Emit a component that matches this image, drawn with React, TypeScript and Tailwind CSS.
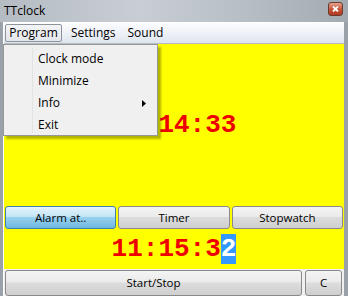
import { useState } from "react";

const ui = { fontFamily: '"Open Sans", "Noto Sans", sans-serif' };
const mono = { fontFamily: '"Liberation Mono", "Courier New", monospace' };

const grayBtn =
  "flex items-center justify-center rounded-[3px] border border-[#8a8a8a] bg-[linear-gradient(#f4f4f4_0%,#ebebeb_45%,#dcdcdc_50%,#cfcfcf_100%)] text-[11.5px] text-black";
const blueBtn =
  "flex items-center justify-center rounded-[3px] border border-[#3c7fb1] bg-[linear-gradient(#e5f4fc_0%,#c4e5f6_45%,#98d1ef_50%,#6fb7df_100%)] text-[11.5px] text-black";

function MenuDropdown() {
  const items = ["Clock mode", "Minimize", "Info", "Exit"];
  return (
    <div className="absolute left-[3px] top-[44px] z-10 w-[155px] h-[92px] border border-[#979797] bg-[#f0f0f0] shadow-[3px_3px_2px_rgba(0,0,0,0.3)]">
      <div className="absolute left-[28px] top-[2px] bottom-[2px] w-px bg-[#e2e3e3]" />
      <div className="flex flex-col pt-[3px]">
        {items.map((it) => (
          <div key={it} className="relative flex h-[22px] items-center pl-[34px] text-[12px] text-black">
            {it}
            {it === "Info" && (
              <svg className="absolute right-[11px] top-[8px]" width="4" height="7" viewBox="0 0 4 7">
                <path d="M0 0 L4 3.5 L0 7 Z" fill="#000" />
              </svg>
            )}
          </div>
        ))}
      </div>
    </div>
  );
}

export default function App() {
  const [menuOpen] = useState(true);

  return (
    <div className="relative w-[348px] h-[296px] overflow-hidden bg-[#9aa1a9]" style={ui}>
      {/* title bar */}
      <div className="flex h-[22px] items-center justify-between bg-[linear-gradient(90deg,#b4bbc3_0%,#c9ced4_40%,#b7bec6_70%,#a3aab2_100%)] pl-[4px] pr-[5px]">
        <span className="text-[12px] text-black">TTclock</span>
        <div className="mt-[-4px] flex h-[14px] w-[15px] items-center justify-center rounded-[3px] border border-[#6b3b30] bg-[linear-gradient(#e9a58f_0%,#c8563c_50%,#b23a20_100%)]">
          <svg width="7" height="6" viewBox="0 0 7 6">
            <path d="M1 0.5 L6 5.5 M6 0.5 L1 5.5" stroke="#fff" strokeWidth="1.8" />
          </svg>
        </div>
      </div>

      {/* client area */}
      <div className="ml-[3px] mr-[4px] flex h-[274px] flex-col border-l border-t border-[#ffffff] bg-[#f0f0f0]">
        {/* menu bar */}
        <div className="flex h-[21px] items-center border-b border-[#b6bcc6] bg-[linear-gradient(#fbfcfe_0%,#eef1f7_50%,#dfe5ee_100%)] pl-[1px] text-[12px] text-black">
          <div className="flex h-[18px] w-[57px] items-center justify-center rounded-[2px] border border-[#8e949c] bg-[linear-gradient(#f3f4f6,#e3e6eb)]">
            Program
          </div>
          <span className="ml-[9px]">Settings</span>
          <span className="ml-[12px]">Sound</span>
        </div>

        {/* yellow clock area */}
        <div className="flex h-[229px] flex-col bg-[#ffff00] px-[1px]">
          <div className="flex flex-1 items-center justify-center">
            <span className="text-[26px] font-bold leading-none text-[#ee0000]" style={mono}>
              11:14:33
            </span>
          </div>
          <div className="grid h-[23px] grid-cols-3 gap-[2px]">
            <div className={blueBtn}>Alarm at..</div>
            <div className={grayBtn}>Timer</div>
            <div className={grayBtn}>Stopwatch</div>
          </div>
          <div className="flex h-[40px] items-center justify-center">
            <span className="text-[26px] font-bold leading-[24px] text-[#ee0000]" style={mono}>
              11:15:3<span className="bg-[#3399ff] text-white">2</span>
            </span>
          </div>
        </div>

        {/* bottom buttons */}
        <div className="flex gap-[3px] pl-[1px] pr-[2px] pt-[1px]">
          <div className={`${grayBtn} h-[26px] flex-1`}>Start/Stop</div>
          <div className={`${grayBtn} h-[26px] w-[37px]`}>C</div>
        </div>
      </div>

      {menuOpen && <MenuDropdown />}
    </div>
  );
}
